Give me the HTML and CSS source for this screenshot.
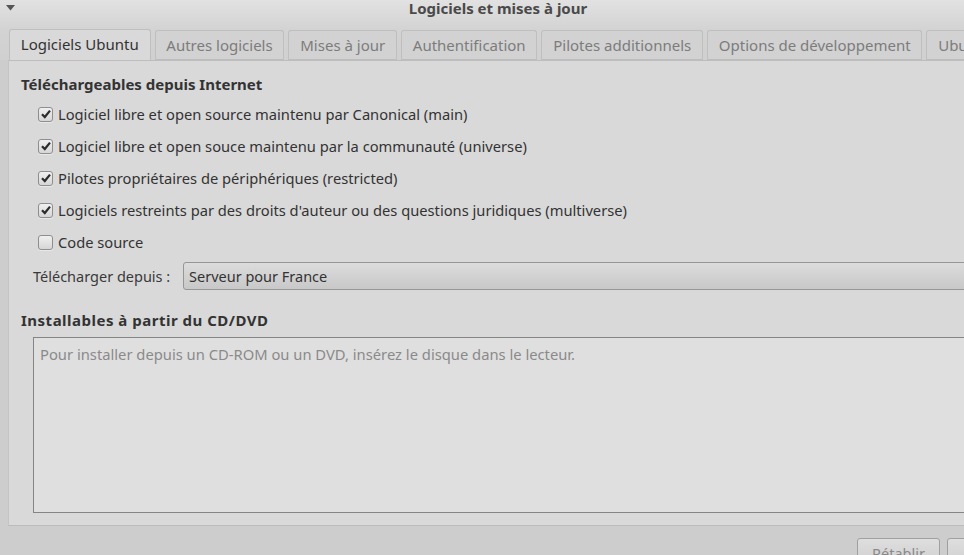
FILE: index.html
```html
<!DOCTYPE html>
<html lang="fr">
<head>
<meta charset="utf-8">
<link rel="stylesheet" href="styles.css">
</head>
<body>
<div class="window">
  <div class="titlebar">
    <svg class="menu-arrow" width="9" height="6" viewBox="0 0 9 6"><path d="M0 0 H9 L4.5 5.5 Z" fill="#555"/></svg>
    <div class="title">Logiciels et mises à jour</div>
  </div>
  <div class="tabs">
    <div class="tab active">Logiciels Ubuntu</div>
    <div class="tab">Autres logiciels</div>
    <div class="tab">Mises à jour</div>
    <div class="tab">Authentification</div>
    <div class="tab">Pilotes additionnels</div>
    <div class="tab">Options de développement</div>
    <div class="tab">Ubuntu Pro</div>
  </div>
  <div class="page">
    <div class="heading">Téléchargeables depuis Internet</div>
    <div class="checks">
      <label class="row"><span class="cb on"><svg width="12" height="12" viewBox="0 0 12 12"><path d="M2 6.2 L4.8 9 L10 2.6" fill="none" stroke="#2b2b2b" stroke-width="2.2"/></svg></span>Logiciel libre et open source maintenu par Canonical (main)</label>
      <label class="row"><span class="cb on"><svg width="12" height="12" viewBox="0 0 12 12"><path d="M2 6.2 L4.8 9 L10 2.6" fill="none" stroke="#2b2b2b" stroke-width="2.2"/></svg></span>Logiciel libre et open souce maintenu par la communauté (universe)</label>
      <label class="row"><span class="cb on"><svg width="12" height="12" viewBox="0 0 12 12"><path d="M2 6.2 L4.8 9 L10 2.6" fill="none" stroke="#2b2b2b" stroke-width="2.2"/></svg></span>Pilotes propriétaires de périphériques (restricted)</label>
      <label class="row"><span class="cb on"><svg width="12" height="12" viewBox="0 0 12 12"><path d="M2 6.2 L4.8 9 L10 2.6" fill="none" stroke="#2b2b2b" stroke-width="2.2"/></svg></span>Logiciels restreints par des droits d'auteur ou des questions juridiques (multiverse)</label>
      <label class="row"><span class="cb"></span>Code source</label>
    </div>
    <div class="source-row">
      <span class="source-label">Télécharger depuis :</span>
      <div class="combo">Serveur pour France</div>
    </div>
    <div class="heading heading2">Installables à partir du CD/DVD</div>
    <div class="cdbox">Pour installer depuis un CD-ROM ou un DVD, insérez le disque dans le lecteur.</div>
  </div>
  <div class="buttons">
    <div class="btn">Rétablir</div>
    <div class="btn">Fermer</div>
  </div>
</div>
</body>
</html>
```
FILE: styles.css
```css
html, body {
  margin: 0;
  padding: 0;
  width: 964px;
  height: 555px;
  overflow: hidden;
  background: #cdcdcd;
}
.window {
  width: 1010px;
  height: 555px;
  font-family: "Noto Sans", "Open Sans", sans-serif;
  font-size: 14px;
  color: #3a3a3a;
  background: #cdcdcd;
  display: flex;
  flex-direction: column;
}
.titlebar {
  height: 30px;
  width: 964px;
  position: relative;
  background: linear-gradient(#e2e2e2, #d3d3d3);
  flex: none;
}
.menu-arrow {
  position: absolute;
  left: 6px;
  top: 5px;
}
.title {
  text-align: center;
  font-weight: bold;
  font-size: 15px;
  line-height: 17px;
  color: #4a4a4a;
  padding-left: 32px;
}
.tabs {
  display: flex;
  align-items: flex-end;
  gap: 4px;
  padding-left: 9px;
  height: 31px;
  margin-top: -1px;
  position: relative;
  z-index: 1;
  flex: none;
  background: linear-gradient(#d3d3d3, #d0d0d0);
}
.tab {
  box-sizing: border-box;
  height: 30px;
  padding: 0 10.8px;
  border: 1px solid #bfbfbf;
  border-bottom: none;
  border-radius: 3px 3px 0 0;
  background: #d2d2d2;
  color: #7c7c7c;
  font-size: 15px;
  line-height: 28px;
  white-space: nowrap;
  box-shadow: inset 0 -1px 0 #bdbdbd;
}
.tab.active {
  height: 31px;
  background: #d9d9d9;
  color: #333;
  box-shadow: none;
}
.page {
  margin-left: 8px;
  box-sizing: border-box;
  height: 466px;
  background: #d9d9d9;
  border-left: 1px solid #c4c4c4;
  border-top: 1px solid #bdbdbd;
  border-bottom: 1px solid #bcbcbc;
  padding: 13px 0 0 12px;
  display: flex;
  flex-direction: column;
  flex: none;
}
.heading {
  font-weight: bold;
  font-size: 15px;
  line-height: 20px;
  color: #333;
}
.checks {
  display: flex;
  flex-direction: column;
  margin-top: 4px;
  padding-left: 17px;
}
.row {
  height: 32px;
  display: flex;
  align-items: center;
  font-size: 14.7px;
  color: #333;
}
.cb {
  box-sizing: border-box;
  width: 15px;
  height: 15px;
  border: 1px solid #8e8e8e;
  border-radius: 3px;
  background: linear-gradient(#f0f0f0, #d6d6d6);
  margin-right: 5px;
  display: flex;
  align-items: center;
  justify-content: center;
  box-shadow: 0 1px 0 rgba(255,255,255,0.4);
}
.source-row {
  display: flex;
  align-items: center;
  margin-top: 4px;
  padding-left: 12px;
  height: 28px;
}
.source-label {
  width: 150px;
  font-size: 14.5px;
  color: #3a3a3a;
}
.combo {
  box-sizing: border-box;
  flex: 1;
  height: 28px;
  border: 1px solid #969696;
  border-radius: 3px;
  background: linear-gradient(#dcdcdc, #c8c8c8);
  padding-left: 5px;
  line-height: 26px;
  font-size: 14.5px;
  color: #333;
}
.heading2 {
  margin-top: 20px;
  letter-spacing: 0.5px;
}
.cdbox {
  box-sizing: border-box;
  margin-left: 12px;
  margin-top: 7px;
  height: 176px;
  border: 1px solid #858585;
  background: #dfdfdf;
  padding: 6px 6px;
  font-size: 14.75px;
  color: #8a8a8a;
}
.buttons {
  display: flex;
  gap: 7px;
  padding-left: 857px;
  margin-top: 12px;
}
.btn {
  box-sizing: border-box;
  width: 83px;
  height: 28px;
  border: 1px solid #a0a0a0;
  border-radius: 3px;
  background: linear-gradient(#dedede, #cfcfcf);
  color: #8a8a8a;
  text-align: center;
  line-height: 28px;
  font-size: 14.5px;
  flex: none;
}
```
